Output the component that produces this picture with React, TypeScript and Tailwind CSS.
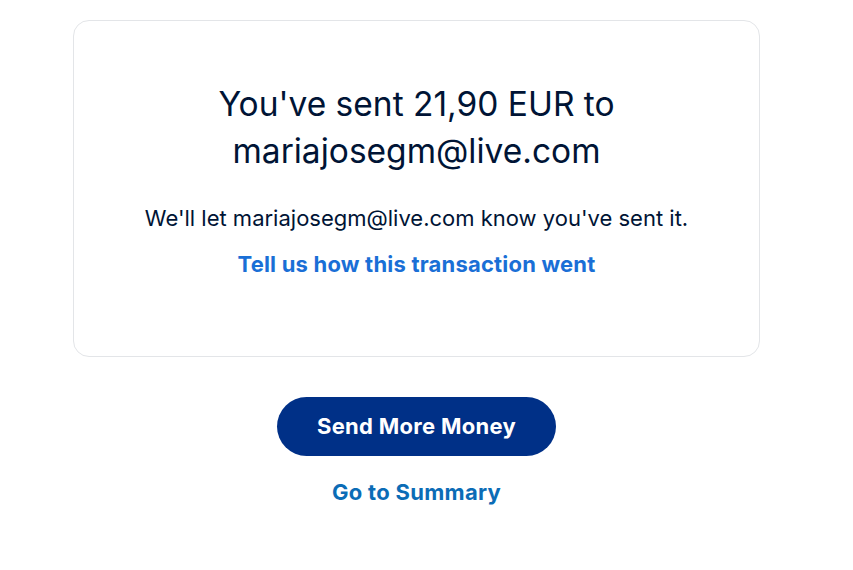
import React from "react";

const App = () => {
  return (
    <div className="min-h-[570px] w-full bg-white pr-5 font-['Inter','Liberation_Sans',sans-serif]">
      <div className="mx-auto w-[687px] pt-5">
        {/* result card */}
        <div className="flex h-[337px] flex-col items-center rounded-2xl border border-[#e3e5e8] px-6 pt-[60px] text-center">
          <h1 className="text-[33.5px] leading-[47px] font-normal text-[#001435]">
            You've sent 21,90 EUR to
            <br />
            mariajosegm@live.com
          </h1>
          <p className="mt-[29px] text-[22px] leading-7 text-[#001435]">
            We'll let mariajosegm@live.com know you've sent it.
          </p>
          <a href="#" className="mt-[18px] text-[22px] leading-7 font-bold text-[#1a6fd6] tracking-[0.2px]">
            Tell us how this transaction went
          </a>
        </div>

        <div className="mt-10 flex flex-col items-center">
          <button className="h-[59px] w-[279px] rounded-full bg-[#003087] text-[22px] font-bold text-white tracking-[0.3px]">
            Send More Money
          </button>
          <a href="#" className="mt-[22px] text-[22px] leading-7 font-bold text-[#0b6cb6] tracking-[0.3px]">
            Go to Summary
          </a>
        </div>
      </div>
    </div>
  );
};

export default App;
